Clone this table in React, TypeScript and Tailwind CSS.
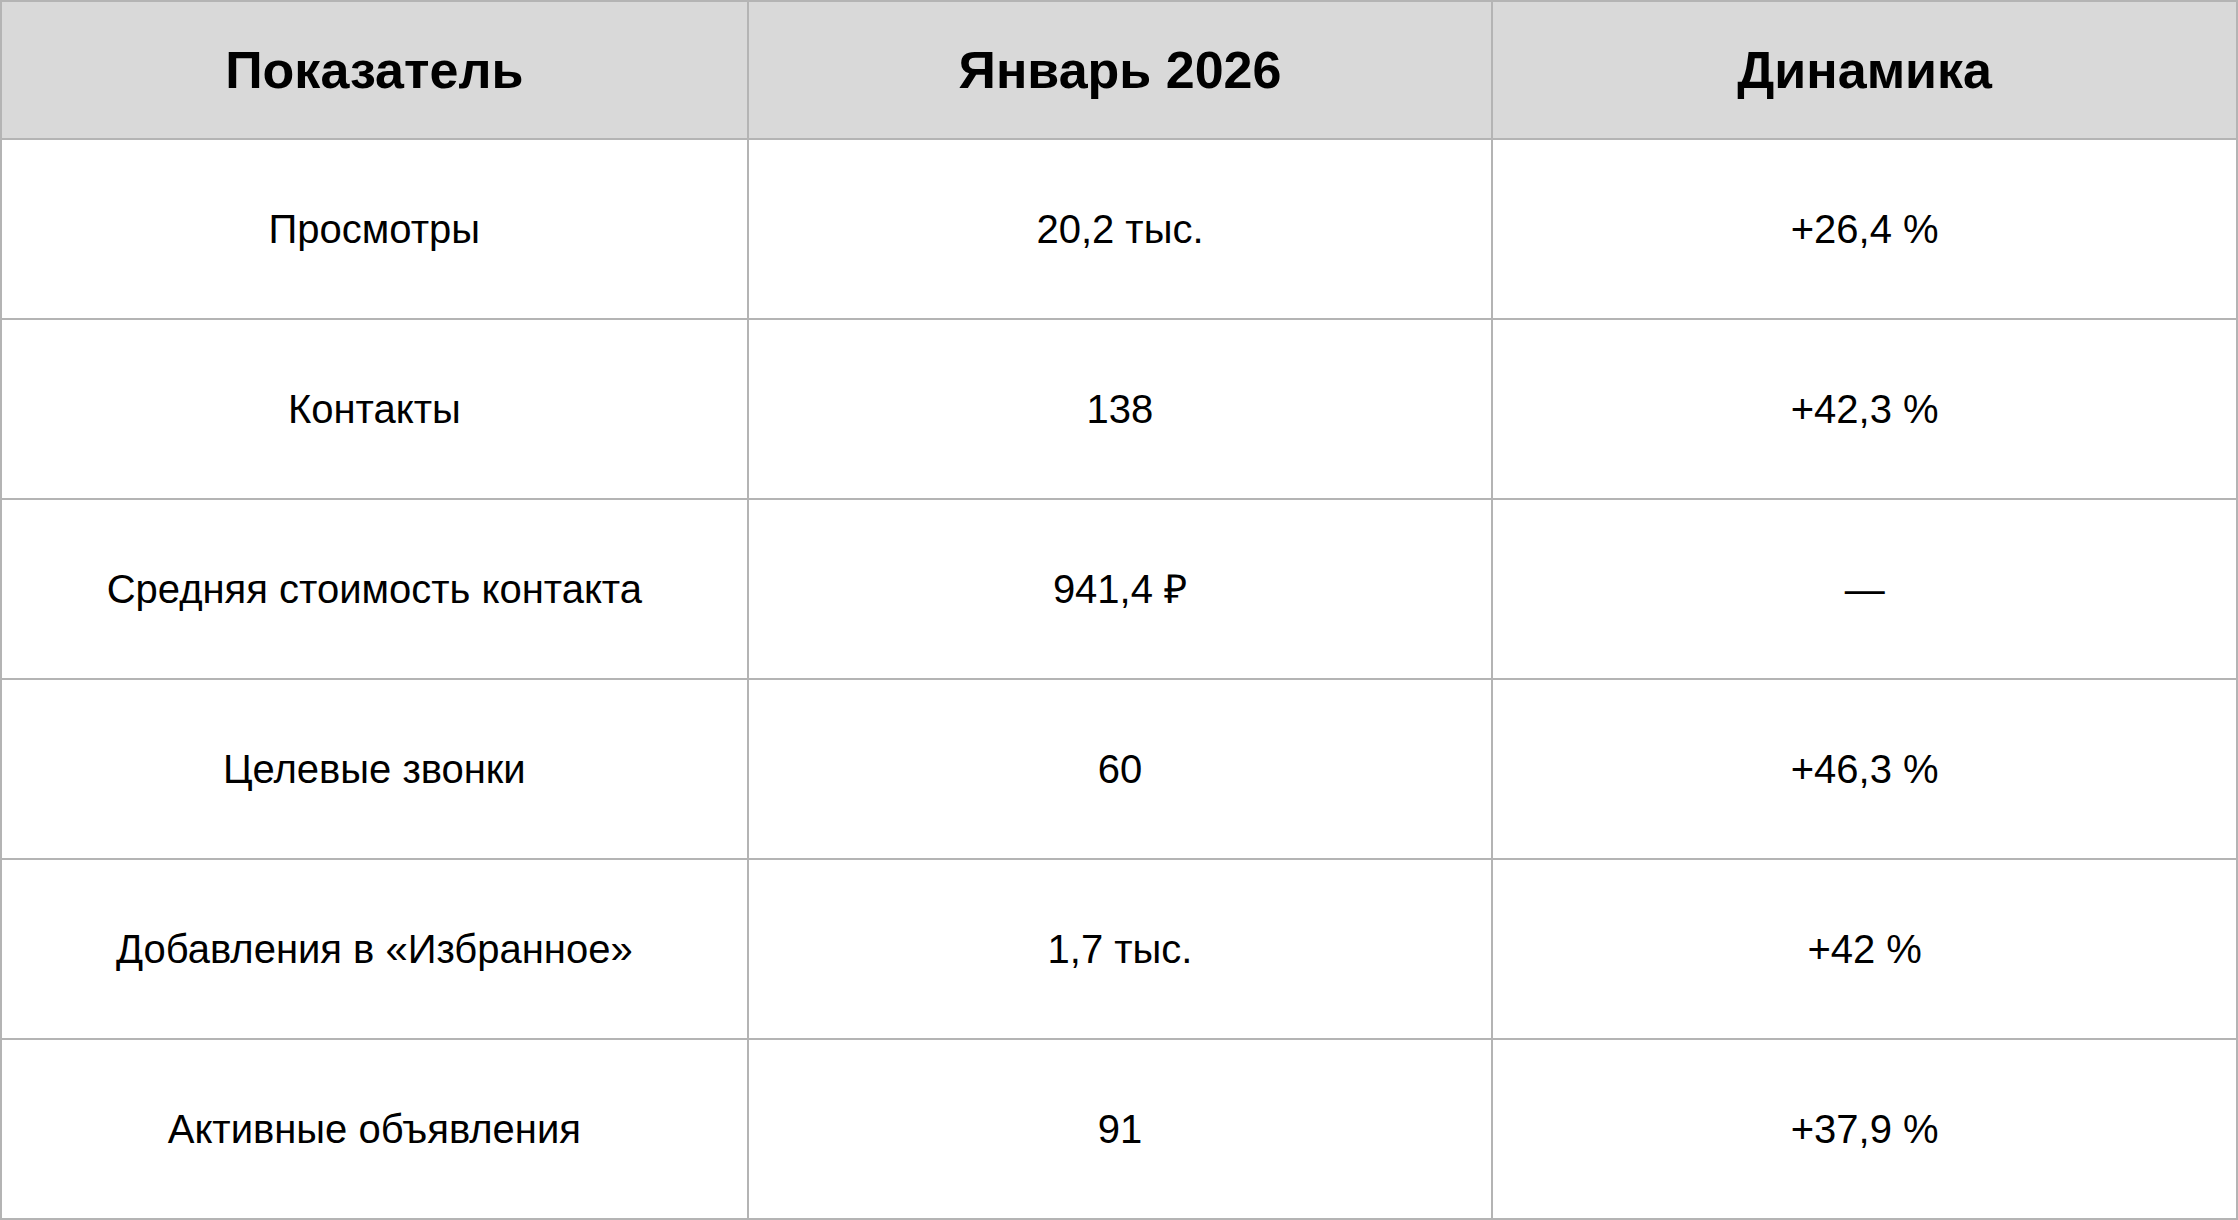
const rows: [string, string, string][] = [
  ["Просмотры", "20,2 тыс.", "+26,4 %"],
  ["Контакты", "138", "+42,3 %"],
  ["Средняя стоимость контакта", "941,4 ₽", "—"],
  ["Целевые звонки", "60", "+46,3 %"],
  ["Добавления в «Избранное»", "1,7 тыс.", "+42 %"],
  ["Активные объявления", "91", "+37,9 %"],
];

const headers = ["Показатель", "Январь 2026", "Динамика"];

export default function App() {
  return (
    <div
      className="h-[1220px] w-[2238px] bg-white text-black"
      style={{ fontFamily: '"Liberation Sans", Arial, sans-serif' }}
    >
      <div className="flex h-full flex-col border-2 border-[#b4b4b4]">
        <div className="grid h-[136px] grid-cols-3 bg-[#d9d9d9]">
          {headers.map((h, i) => (
            <div
              key={h}
              className={`flex items-center justify-center text-[52px] font-bold ${
                i > 0 ? "border-l-2 border-[#b4b4b4]" : ""
              }`}
            >
              {h}
            </div>
          ))}
        </div>
        {rows.map((row) => (
          <div
            key={row[0]}
            className="grid h-[180px] grid-cols-3 border-t-2 border-[#b4b4b4]"
          >
            {row.map((cell, i) => (
              <div
                key={i}
                className={`flex items-center justify-center text-[40px] ${
                  i > 0 ? "border-l-2 border-[#b4b4b4]" : ""
                }`}
              >
                {cell}
              </div>
            ))}
          </div>
        ))}
      </div>
    </div>
  );
}
